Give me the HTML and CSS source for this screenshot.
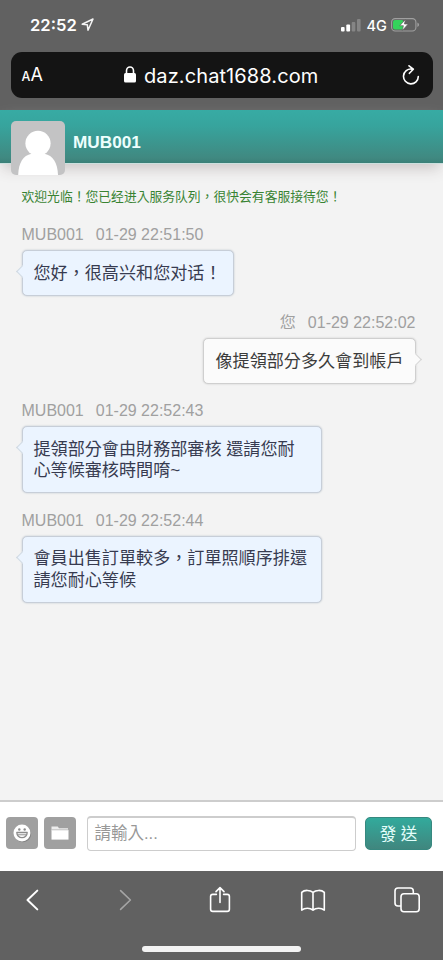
FILE: index.html
```html
<!DOCTYPE html>
<html lang="zh-Hant">
<head>
<meta charset="utf-8">
<meta name="viewport" content="width=device-width, initial-scale=1">
<title>MUB001</title>
<link rel="stylesheet" href="styles.css">
</head>
<body>
<div class="browser-top">
  <div class="status">
    <span class="clock">22:52</span>
    <svg class="loc" width="13" height="13" viewBox="0 0 13 13"><path d="M1.2 6.2 12 1 7 12.2 6.3 6.7Z" fill="none" stroke="#f4f4f4" stroke-width="1.5" stroke-linejoin="round"/></svg>
    <svg class="signal" width="20" height="13" viewBox="0 0 20 13"><g fill="#fff"><rect x="0" y="8" width="3.6" height="4.5" rx="1"/><rect x="5.3" y="5.5" width="3.8" height="7" rx="1"/></g><g fill="#858585"><rect x="10.7" y="3" width="3.6" height="9.5" rx="1"/><rect x="16" y="0" width="3.6" height="12.5" rx="1"/></g></svg>
    <span class="net">4G</span>
    <svg class="battery" width="29" height="14" viewBox="0 0 29 14"><rect x=".6" y=".6" width="24.3" height="12.4" rx="3.6" fill="none" stroke="#a0a0a0" stroke-width="1.1"/><path d="M26.4 4.6q1.7.8 1.7 2.2t-1.7 2.2z" fill="#a0a0a0"/><rect x="2" y="2" width="10.5" height="9.6" rx="2" fill="#34d35b"/><path d="M14.5 1.4 8.7 7.7h3.7l-1.1 4.9 5.9-6.6h-3.8z" fill="#fff" stroke="#626262" stroke-width=".7"/></svg>
  </div>
  <div class="address">
    <span class="aa"><small>A</small>A</span>
    <svg class="lock" width="12" height="17" viewBox="0 0 12 17"><rect x="0" y="7" width="12" height="9.6" rx="1.5" fill="#fff"/><path d="M2.5 8V4.8a3.5 3.8 0 0 1 7 0V8" fill="none" stroke="#fff" stroke-width="1.6"/></svg>
    <span class="url">daz.chat1688.com</span>
    <svg class="reload" width="18" height="20" viewBox="0 0 18 20"><path d="M9.8 4.1A7.4 7.4 0 1 0 16.3 11.5M7 .8l4.3 3.4L7.4 8.3" fill="none" stroke="#fff" stroke-width="1.6" stroke-linecap="round" stroke-linejoin="round"/></svg>
  </div>
</div>
<header class="agent">
  <svg class="avatar" width="54" height="54" viewBox="0 0 54 54"><rect width="54" height="54" rx="5" fill="#c3c3c4"/><ellipse cx="27" cy="22.3" rx="12.6" ry="12.6" fill="#fff"/><path d="M7.2 54C7.5 42 12 34.5 20.5 32.8h13C42 34.5 46.6 42 47 54z" fill="#fff"/></svg>
  <h1>MUB001</h1>
</header>
<main class="chat">
  <p class="welcome">欢迎光临！您已经进入服务队列，很快会有客服接待您！</p>
  <section class="msg">
    <p class="meta"><span>MUB001</span><time>01-29 22:51:50</time></p>
    <div class="bubble">您好，很高兴和您对话！</div>
  </section>
  <section class="msg mine">
    <p class="meta"><span>您</span><time>01-29 22:52:02</time></p>
    <div class="bubble">像提領部分多久會到帳戶</div>
  </section>
  <section class="msg long">
    <p class="meta"><span>MUB001</span><time>01-29 22:52:43</time></p>
    <div class="bubble">提領部分會由財務部審核 還請您耐<br>心等候審核時間唷~</div>
  </section>
  <section class="msg long">
    <p class="meta"><span>MUB001</span><time>01-29 22:52:44</time></p>
    <div class="bubble">會員出售訂單較多，訂單照順序排還<br>請您耐心等候</div>
  </section>
</main>
<footer class="composer">
  <button class="tool" type="button"><svg width="20" height="20" viewBox="0 0 20 20"><circle cx="10.8" cy="10.8" r="8.4" fill="#7f7f7f"/><circle cx="10" cy="10" r="8.5" fill="#fff"/><g fill="#8c8c8c"><circle cx="7.3" cy="6.5" r="1.2"/><circle cx="12.7" cy="6.5" r="1.2"/></g><path d="M4.8 9.5h10.4a5.2 5.2 0 0 1-10.4 0z" fill="#fff" stroke="#8c8c8c" stroke-width="1.3" stroke-linejoin="round"/><path d="M5.5 11.8h9" stroke="#8c8c8c"/></svg></button>
  <button class="tool" type="button"><svg width="20" height="20" viewBox="0 0 20 20"><path d="M1.5 3.5h6.2l1.3 1.7H18v2.1H1.5z" fill="#ededed"/><path d="M1.5 7h17v9.6h-17z" fill="#fff"/><path d="M1.5 6.8h17" stroke="#b5b5b5" stroke-width=".8"/></svg></button>
  <div class="field">請輸入...</div>
  <button class="send" type="button">發 送</button>
</footer>
<nav class="toolbar">
  <div class="actions">
    <svg width="28" height="28" viewBox="0 0 28 28"><path d="M19.3 4.6 9.5 14l9.8 9.4" stroke-width="2"/></svg>
    <svg class="dim" width="28" height="28" viewBox="0 0 28 28"><path d="M8.6 4.6 18.4 14l-9.8 9.4"/></svg>
    <svg width="28" height="28" viewBox="0 0 28 28"><path d="M10.4 8.4H6.8q-2.2 0-2.2 2.2v12.6q0 2.2 2.2 2.2h14.4q2.2 0 2.2-2.2V10.6q0-2.2-2.2-2.2h-3.6M14 16.5V1.7M10 5.6l4-4 4 4"/></svg>
    <svg width="28" height="28" viewBox="0 0 28 28"><path d="M14 6.3C11.1 3.9 5.4 3.7 2.7 6.3v17.8c3-2.5 8.4-2.5 11.3 0 2.9-2.5 8.3-2.5 11.3 0V6.3C22.6 3.7 16.9 3.9 14 6.3zv17.6M14 6.3v17.8"/></svg>
    <svg width="28" height="28" viewBox="0 0 28 28"><rect x="8" y="7.7" width="18.2" height="18" rx="3"/><path d="M7.4 20H5q-3 0-3-3V5q0-3 3-3h12.3q3 0 3 3v2.2"/></svg>
  </div>
  <div class="home"></div>
</nav>
</body>
</html>
```
FILE: styles.css
```css
* { box-sizing: border-box; }
html, body { height: 100%; }
body {
  margin: 0;
  display: flex;
  flex-direction: column;
  overflow: hidden;
  background: #f3f3f3;
  font-family: "Liberation Sans", "Noto Sans CJK TC", sans-serif;
}
p, h1 { margin: 0; }
svg { display: block; flex: none; }
button { border: 0; padding: 0; font-family: inherit; }

.browser-top { flex: none; height: 110px; background: #616161; color: #fff; font-family: Inter, sans-serif; }
.status { display: flex; align-items: center; height: 52px; padding: 0 23px 0 30px; }
.clock { font-size: 16.6px; line-height: 20px; font-weight: 600; width: 50.5px; margin-top: -3px; }
.loc { margin-top: -3px; }
.signal { margin: -1px 6px 0 auto; }
.net { font-size: 14.5px; font-weight: 500; width: 24.5px; margin-top: -2px; }
.battery { margin-top: -3px; }
.address { display: flex; align-items: center; height: 45.5px; margin: 0 10.5px; padding: 0 13px 0 11px; border-radius: 11px; background: #141414; }
.aa { width: 102px; font-size: 18px; }
.aa small { font-size: 12.5px; font-weight: 500; }
.lock { margin-top: 0; }
.url { margin: 2px 0 0 8.5px; font-size: 20px; letter-spacing: .1px; white-space: nowrap; }
.reload { margin: 0 0 0 auto; }

.agent {
  position: relative;
  z-index: 1;
  flex: none;
  display: flex;
  align-items: flex-start;
  height: 53px;
  padding: 11px 10.5px 0;
  background: linear-gradient(#37aba4, #37a49d 30%, #408981 90%, #3b8078);
  box-shadow: 0 1px 0 #cce0de, 0 8px 14px -3px #c8c3c3;
}
.agent h1 { margin-left: 8.5px; color: #edfffd; font-size: 17.2px; line-height: 20px; padding-top: 11px; }

.chat { flex: 1; min-height: 0; padding: 25px 27.5px 0 21.5px; }
.welcome { font-size: 12.8px; line-height: 18px; color: #388332; white-space: nowrap; }
.msg { display: flex; flex-direction: column; align-items: flex-start; margin-top: 17.5px; }
.welcome + .msg { margin-top: 19px; }
.meta { display: flex; gap: 12px; height: 20px; margin-bottom: 5px; color: #a0a0a0; font-size: 16px; line-height: 20px; }
.bubble {
  position: relative;
  padding: 11.5px 11px 10.5px;
  border: 1px solid #c7ced8;
  border-radius: 5px;
  background: #ebf4ff;
  box-shadow: 0 0 2px #b8c0c8;
  color: #373b50;
  font-size: 17.1px;
  line-height: 21.5px;
  white-space: nowrap;
}
.bubble::before {
  content: "";
  position: absolute;
  left: -5px;
  top: 16px;
  width: 8px;
  height: 8px;
  border: solid #d0d8e0;
  border-width: 0 0 1px 1px;
  background: #ebf4ff;
  transform: rotate(45deg);
}
.long .bubble { width: 300px; }
.mine { align-items: flex-end; }
.mine .bubble { border-color: #cfcfcf; background: #fbfbfb; box-shadow: 0 0 2px #c4c4c4; color: #3b3b3b; }
.mine .bubble::before { left: auto; right: -5px; border-color: #d4d4d4; border-width: 1px 1px 0 0; background: #fbfbfb; }

.composer { flex: none; display: flex; align-items: center; height: 71px; padding: 0 11px 6px 5.5px; border-top: 2px solid #cdcdcd; background: #fff; }
.tool { display: grid; place-items: center; width: 32px; height: 32px; margin: -1px 6.5px 0 0; border-radius: 4px; background: #a0a0a0; }
.field { flex: 1; height: 35px; margin: 0 9px 0 4px; padding-left: 7px; border: 1px solid #cdcdcd; border-top: 2px solid #cdcdcd; border-radius: 4px; color: #989898; font-size: 16.5px; line-height: 31px; }
.send { width: 67px; height: 33px; border: 1px solid #37887f; border-radius: 5px; background: linear-gradient(#32aa9c, #40867e); color: #e4fffb; font-size: 16.5px; line-height: 30px; }

.toolbar { flex: none; height: 89px; background: #616161; }
.actions { display: flex; justify-content: space-between; padding: 15px 22px 0 18px; }
.actions svg { fill: none; stroke: #fff; stroke-width: 1.6; stroke-linecap: round; stroke-linejoin: round; }
.actions .dim { stroke: #a5a5a5; }
.home { width: 159px; height: 6px; margin: 32px auto 0; border-radius: 3px; background: #f3f3f3; }
```
